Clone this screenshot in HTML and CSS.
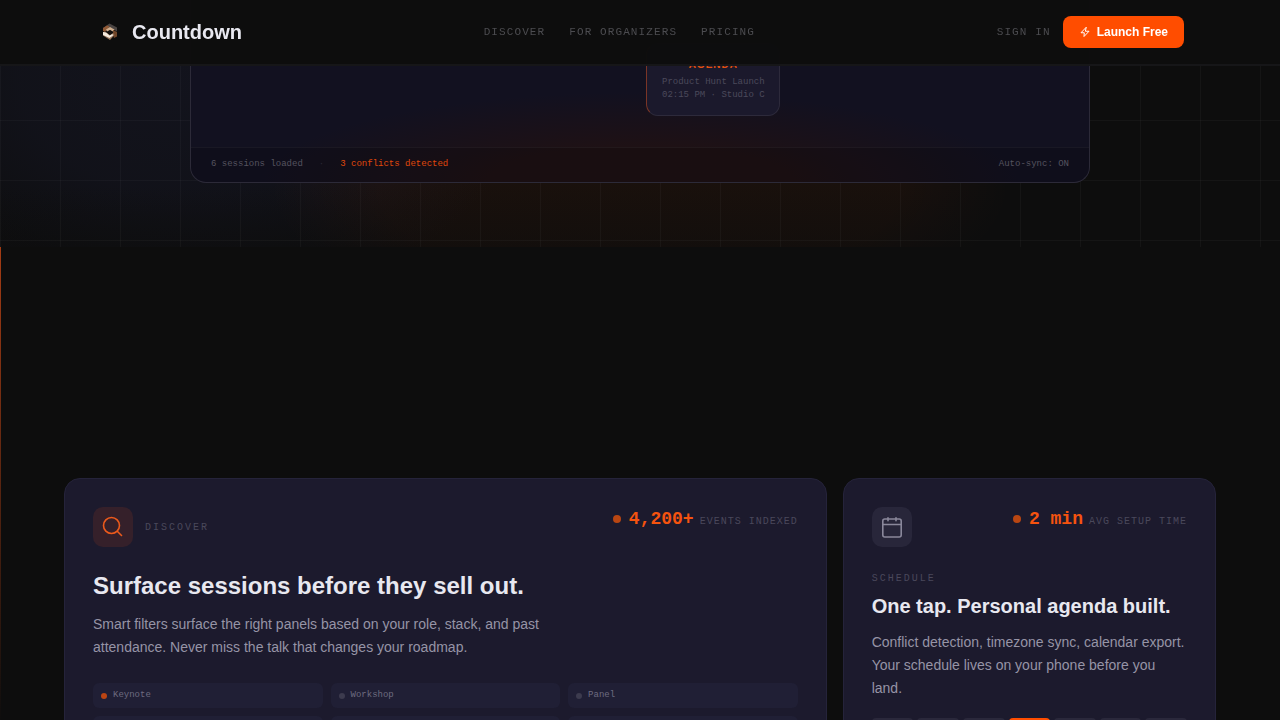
FILE: index.html
```html
<!DOCTYPE html>
<html lang="en">
<head>
<meta charset="utf-8">
<meta name="viewport" content="width=device-width, initial-scale=1">
<title>Countdown</title>
<link rel="stylesheet" href="styles.css">
</head>
<body>
<header class="topbar">
  <div class="topbar-inner">
    <a class="brand" href="#">
      <svg class="brand-mark" viewBox="0 0 28 28" aria-hidden="true">
        <path d="M7 10 13.500 5.500 21 9.500v4l-5-3-4 1-3 2z" fill="#4a4442"/>
        <path d="M7 10l4-2.500 2.500 1-3 3.500L9 14l-2-1z" fill="#8f5835"/>
        <path d="M10 11.500 14 9l4.500 2.500-1.500 2-3-1.500-3 1.500z" fill="#cfae8d"/>
        <path d="M17 12l4 2v4.500l-3 1.500-1-3.500z" fill="#714629"/>
        <path d="M7 14l3.500.5L14 17l3-2 1.500 2-4.500 5-7-4.500z" fill="#96765c"/>
        <path d="M7 14l3 .5 3.500 3 3-1.500.5 1.500L13.500 20 7 17z" fill="#f5ebdf"/>
        <circle cx="14" cy="14.500" r="2" fill="#14100e"/>
      </svg>
      <span>Countdown</span>
    </a>
    <nav class="nav">
      <a href="#">DISCOVER</a>
      <a href="#">FOR ORGANIZERS</a>
      <a href="#">PRICING</a>
    </nav>
    <div class="actions">
      <a class="signin" href="#">SIGN IN</a>
      <button class="launch" type="button">
        <svg viewBox="0 0 24 24" aria-hidden="true"><path d="M14 3 4 13.500h6.500L10 21 20 10.500h-6.500z"/></svg>
        Launch Free
      </button>
    </div>
  </div>
</header>

<main>
  <section class="hero">
    <div class="panel">
      <div class="canvas">
        <div class="node">
          <strong>AGENDA</strong>
          <span>Product Hunt Launch</span>
          <span>02:15 PM · Studio C</span>
        </div>
      </div>
      <div class="status">
        <div class="status-group">
          <span>6 sessions loaded</span>
          <span class="sep">·</span>
          <span class="warn">3 conflicts detected</span>
        </div>
        <span>Auto-sync: ON</span>
      </div>
    </div>
  </section>

  <section class="features">
    <article class="card card-wide">
      <div class="card-head">
        <div class="card-tag">
          <span class="icon icon-hot">
            <svg viewBox="0 0 24 24" aria-hidden="true"><circle cx="10.500" cy="10.500" r="8"/><path d="m16.500 16.500 4 4"/></svg>
          </span>
          <span class="label">DISCOVER</span>
        </div>
        <div class="stat"><i class="dot"></i><b>4,200+</b><span>EVENTS INDEXED</span></div>
      </div>
      <h2>Surface sessions before they sell out.</h2>
      <p>Smart filters surface the right panels based on your role, stack, and past attendance. Never miss the talk that changes your roadmap.</p>
      <ul class="chips">
        <li class="on">Keynote</li>
        <li>Workshop</li>
        <li>Panel</li>
        <li></li>
        <li></li>
        <li></li>
      </ul>
    </article>

    <article class="card">
      <div class="card-head">
        <span class="icon">
          <svg viewBox="0 0 24 24" aria-hidden="true"><rect x="2.800" y="4" width="18.400" height="18" rx="2"/><path d="M8 2.800v3M16 2.800v3M3 9.500h18"/></svg>
        </span>
        <div class="stat"><i class="dot"></i><b>2 min</b><span>AVG SETUP TIME</span></div>
      </div>
      <div class="label">SCHEDULE</div>
      <h3>One tap. Personal agenda built.</h3>
      <p>Conflict detection, timezone sync, calendar export. Your schedule lives on your phone before you land.</p>
      <div class="week"><i></i><i></i><i></i><i class="today"></i><i></i><i></i><i></i></div>
    </article>
  </section>
</main>
</body>
</html>
```

FILE: styles.css
```css
:root {
  --bg: #0d0d0d;
  --accent: #ff4d00;
  --sans: "Liberation Sans", Arial, sans-serif;
  --mono: "Liberation Mono", "Courier New", monospace;
}

* { box-sizing: border-box; }

html { scrollbar-width: none; }

body {
  margin: 0;
  background: var(--bg);
  color: #e8e8f0;
  font-family: var(--sans);
}

a { color: inherit; text-decoration: none; }

/* Top bar */
.topbar {
  position: fixed;
  inset: 0 0 auto;
  z-index: 10;
  background: #0d0d0dfa;
  border-bottom: 2px solid #161618;
}

.topbar-inner {
  display: flex;
  align-items: center;
  justify-content: space-between;
  height: 64px;
  padding: 0 96px;
}

.brand {
  display: flex;
  align-items: center;
  gap: 8px;
  font-size: 20px;
  font-weight: 700;
}

.brand-mark { width: 28px; height: 28px; }

.nav { display: flex; gap: 24px; }

.nav,
.signin {
  color: #4c4c50;
  font-family: var(--mono);
  font-size: 11px;
  letter-spacing: 0.1em;
}

.actions { display: flex; align-items: center; gap: 12px; }

.launch {
  display: flex;
  align-items: center;
  gap: 6px;
  height: 32px;
  padding: 0 16px;
  border: 0;
  border-radius: 8px;
  background: var(--accent);
  color: #fff;
  font: 700 12px var(--sans);
}

svg { flex: none; }

.launch svg,
.icon svg {
  fill: none;
  stroke: currentColor;
  stroke-width: 2;
  stroke-linecap: round;
  stroke-linejoin: round;
}

.launch svg { width: 12px; height: 12px; }

/* Hero */
.hero {
  padding: 0 64px 64px;
  background:
    linear-gradient(90deg, #ffffff08 1px, transparent 1px) 0 0 / 60px 60px,
    linear-gradient(#ffffff08 1px, transparent 1px) 0 0 / 60px 60px,
    linear-gradient(transparent 75%, #0d0d0d80),
    radial-gradient(370px 150px at 50% 185px, #ff4d000d 70%, transparent),
    radial-gradient(340px 230px at 190px 80px, #2a2e6030, #2a2e6026 50%, transparent),
    var(--bg);
}

.panel {
  max-width: 900px;
  margin: 0 auto;
  overflow: hidden;
  border: 1px solid #2c2a38;
  border-top: 0;
  border-radius: 0 0 16px 16px;
  background:
    radial-gradient(380px 90px at 50% 100%, #2a110a80 40%, transparent),
    #121120;
}

.canvas { position: relative; height: 147px; }

.node {
  position: absolute;
  bottom: 31px;
  left: 455px;
  display: flex;
  flex-direction: column;
  align-items: center;
  padding: 14px 14px 13px 15px;
  border: 1px solid #2d2a3b;
  border-left-color: #7a3526;
  border-radius: 12px;
  background: #1b192c;
  color: #4b495b;
  font: 9px/13px var(--mono);
  white-space: nowrap;
}

.node strong {
  margin-bottom: 4px;
  color: #e4510f;
  font: 700 10px/14px var(--sans);
  letter-spacing: 0.1em;
}

.status {
  display: flex;
  justify-content: space-between;
  padding: 9px 20px 11px;
  border-top: 1px solid #ffffff0b;
  background: #00000026;
  color: #55535f;
  font: 9px/14px var(--mono);
}

.status-group { display: flex; gap: 16px; }
.sep { color: #2a2835; }
.warn { color: #e0480b; }

/* Features */
.features {
  position: relative;
  display: grid;
  grid-template-columns: repeat(3, 1fr);
  gap: 16px;
  padding: 231px 64px 64px;
}

.features::before {
  content: "";
  position: absolute;
  inset: 0 auto 0 0;
  width: 1px;
  background: linear-gradient(#a43c14, transparent 80%);
}

.card {
  padding: 28px;
  border: 1px solid #25233a;
  border-radius: 16px;
  background: #1c1a2d;
}

.card-wide { grid-column: span 2; }

.card-head {
  display: flex;
  align-items: flex-start;
  justify-content: space-between;
  margin-bottom: 24px;
}

.card-tag { display: flex; align-items: center; gap: 12px; }

.icon {
  display: grid;
  place-items: center;
  width: 40px;
  height: 40px;
  border-radius: 10px;
  background: #28263a;
  color: #8a889b;
}

.icon svg { width: 24px; height: 24px; stroke-width: 1.6; }
.icon-hot { background: #35202a; color: #ec5a1c; }

.label {
  color: #4a485b;
  font: 10px/15px var(--mono);
  letter-spacing: 0.2em;
}

.stat { display: flex; align-items: baseline; line-height: 24px; }

.stat b {
  margin: 0 6px 0 8px;
  color: #f5530f;
  font-family: var(--mono);
  font-size: 18px;
}

.stat span {
  color: #4a485b;
  font-family: var(--mono);
  font-size: 10px;
  letter-spacing: 0.1em;
}

.dot {
  align-self: flex-start;
  width: 8px;
  height: 8px;
  margin-top: 8px;
  border-radius: 50%;
  background: #b94612;
}

h2 { margin: 0 0 13px; font-size: 24px; line-height: 29px; }
h3 { margin: 8px 0 12px; font-size: 20px; line-height: 25px; }

.card p {
  max-width: 480px;
  margin: 0;
  color: #9694a6;
  font-size: 14px;
  line-height: 23px;
}

.chips {
  display: grid;
  grid-template-columns: repeat(3, 1fr);
  gap: 8px;
  margin: 24px 0 0;
  padding: 0;
  list-style: none;
}

.chips li {
  display: flex;
  align-items: center;
  gap: 6px;
  height: 25px;
  padding: 0 8px;
  border-radius: 6px;
  background: #201f35;
  color: #6e6c80;
  font: 9px/13px var(--mono);
}

.chips li::before {
  content: "";
  width: 6px;
  height: 6px;
  border-radius: 50%;
  background: #3c3b4e;
}

.chips .on::before { background: #bb4513; }

.week {
  display: grid;
  grid-template-columns: repeat(7, 1fr);
  gap: 4px;
  margin-top: 18px;
}

.week i { height: 32px; border-radius: 4px; background: #2a283b; }
.week .today { background: var(--accent); }
```
